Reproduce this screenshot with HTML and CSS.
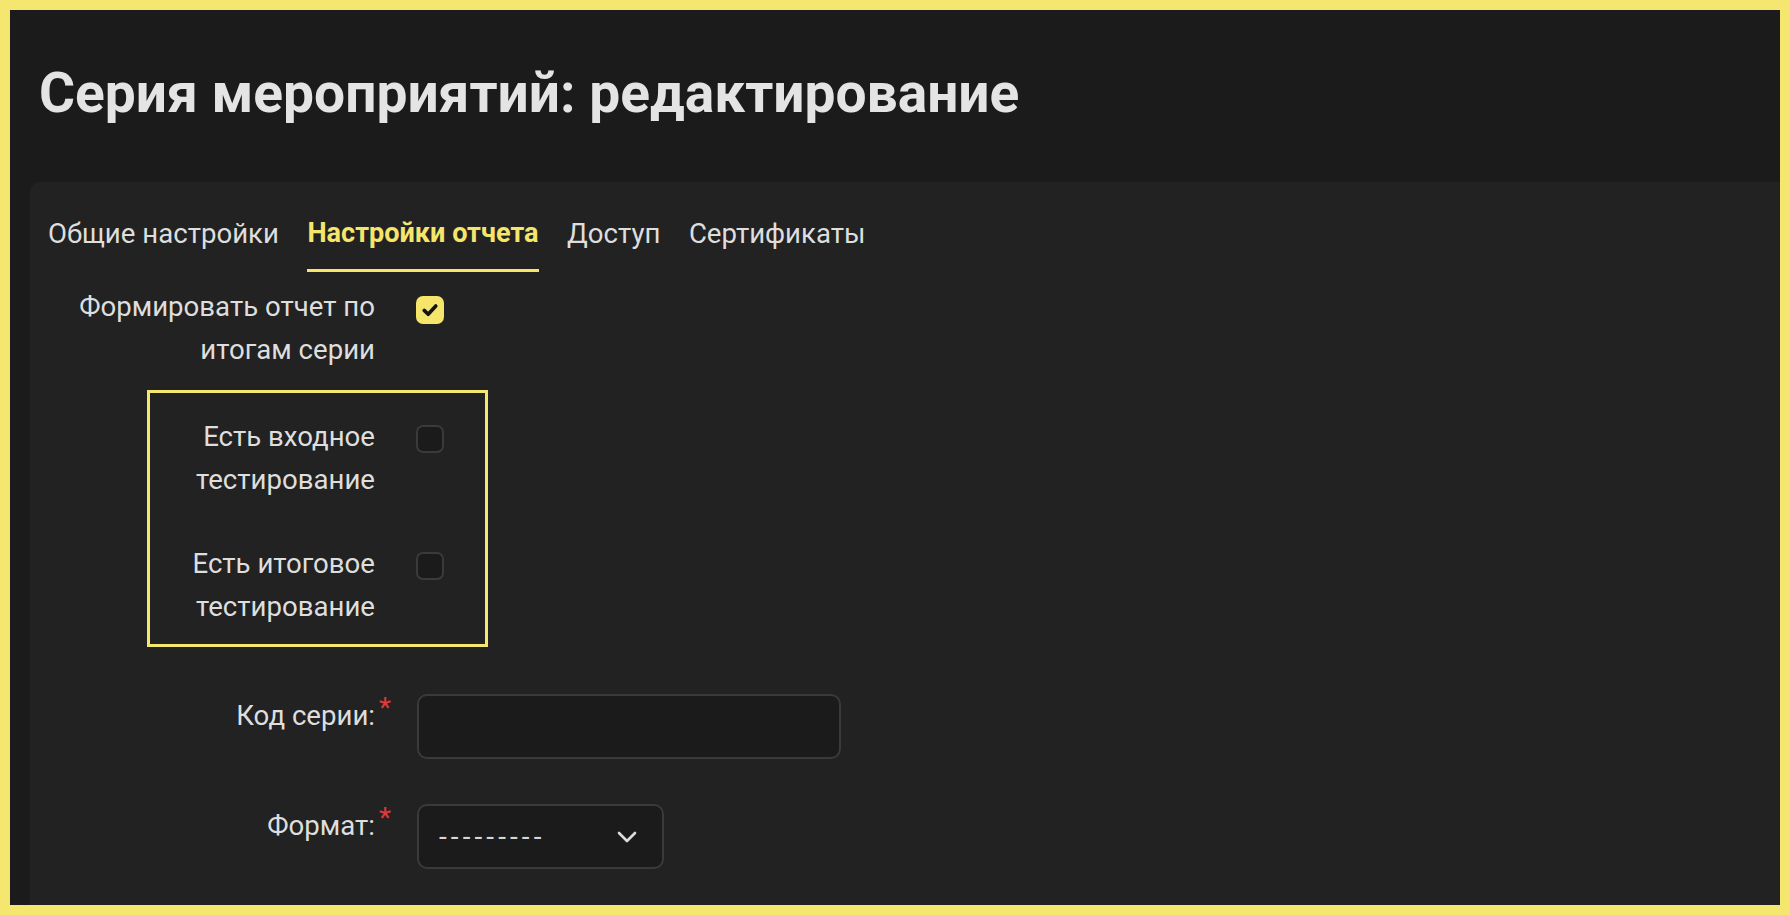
FILE: index.html
```html
<!DOCTYPE html>
<html lang="ru">
<head>
<meta charset="utf-8">
<title>Серия мероприятий: редактирование</title>
<link rel="stylesheet" href="styles.css">
</head>
<body>
<div class="frame">
  <header class="page-header">
    <h1 class="page-title">Серия мероприятий: редактирование</h1>
  </header>
  <main class="card">
    <nav class="tabs">
      <a class="tab">Общие настройки</a>
      <a class="tab tab-active">Настройки отчета</a>
      <a class="tab">Доступ</a>
      <a class="tab">Сертификаты</a>
    </nav>
    <form class="form">
      <div class="row">
        <label class="label">Формировать отчет по итогам серии</label>
        <span class="checkbox checked">
          <svg class="check-icon" viewBox="0 0 28 28" width="28" height="28"><polyline points="8.2,14.4 12.2,18.3 19.8,10" fill="none" stroke="#141414" stroke-width="3.6" stroke-linecap="round" stroke-linejoin="round"/></svg>
        </span>
      </div>
      <div class="group">
        <div class="row">
          <label class="label">Есть входное тестирование</label>
          <span class="checkbox"></span>
        </div>
        <div class="row row-next">
          <label class="label">Есть итоговое тестирование</label>
          <span class="checkbox"></span>
        </div>
      </div>
      <div class="row row-field row-code">
        <label class="label required">Код серии:</label>
        <input class="input" type="text">
      </div>
      <div class="row row-field row-format">
        <label class="label required">Формат:</label>
        <div class="select">
          <span class="select-value">---------</span>
          <svg class="chevron" viewBox="0 0 20 12" width="20" height="12"><polyline points="2,2 10,10 18,2" fill="none" stroke="#dcdcdc" stroke-width="2.6" stroke-linecap="round" stroke-linejoin="round"/></svg>
        </div>
      </div>
    </form>
  </main>
</div>
</body>
</html>
```
FILE: styles.css
```css
html, body {
  margin: 0;
  padding: 0;
}
body {
  font-family: Roboto, "Noto Sans", sans-serif;
  background: #f5e66f;
}
.frame {
  box-sizing: border-box;
  width: 1790px;
  height: 915px;
  border: 10px solid #f5e66f;
  background: #1b1b1b;
  display: flex;
  flex-direction: column;
  overflow: hidden;
}
.page-header {
  box-sizing: border-box;
  height: 172px;
  padding: 51px 0 0 29px;
  flex-shrink: 0;
}
.page-title {
  margin: 0;
  font-size: 55.1px;
  font-weight: 700;
  line-height: normal;
  color: #e4e4e4;
}
.card {
  flex: 1;
  margin-left: 20px;
  background: #222222;
  border-top-left-radius: 10px;
  padding: 35px 0 0 18px;
}
.tabs {
  display: flex;
  gap: 28.5px;
}
.tab {
  font-size: 27.6px;
  line-height: 33px;
  color: #dedede;
  padding-bottom: 19px;
  border-bottom: 3px solid transparent;
}
.tab-active {
  color: #f5e56b;
  font-weight: 700;
  font-size: 27.1px;
  border-bottom-color: #f5e56b;
}
.form {
  margin-top: 13px;
}
.row {
  display: flex;
  align-items: flex-start;
}
.label {
  flex-shrink: 0;
  width: 327px;
  text-align: right;
  font-size: 27.6px;
  line-height: 43px;
  color: #dedede;
  position: relative;
}
.checkbox {
  box-sizing: border-box;
  width: 28px;
  height: 28px;
  margin: 11px 0 0 41px;
  border: 2px solid #3a3a3a;
  border-radius: 7px;
  background: #1b1b1b;
  display: flex;
  align-items: center;
  justify-content: center;
}
.checkbox.checked {
  background: #f5e56b;
  border-color: #f5e56b;
}
.check-icon {
  display: block;
  flex-shrink: 0;
}
.group {
  box-sizing: border-box;
  width: 341px;
  margin: 19px 0 0 99px;
  border: 3px solid #f5e66f;
  padding: 22px 0 16px 0;
}
.group .label {
  width: 225px;
}
.group .checkbox {
  margin-top: 10px;
}
.row-next {
  margin-top: 41px;
}
.row-code {
  margin-top: 47px;
}
.row-format {
  margin-top: 45px;
}
.required::after {
  content: "*";
  position: absolute;
  left: 100%;
  top: -8px;
  margin-left: 4px;
  color: #e0393a;
  font-size: 28px;
  line-height: 43px;
}
.input {
  box-sizing: border-box;
  width: 424px;
  height: 65px;
  margin: 0 0 0 42px;
  border: 2px solid #3a3a3a;
  border-radius: 10px;
  background: #1b1b1b;
  color: #dedede;
  font-family: inherit;
  font-size: 28px;
  padding: 0 20px;
  outline: none;
}
.select {
  box-sizing: border-box;
  width: 247px;
  height: 65px;
  margin-left: 42px;
  border: 2px solid #3a3a3a;
  border-radius: 10px;
  background: #1b1b1b;
  display: flex;
  align-items: center;
  justify-content: space-between;
  padding: 0 25px 0 20px;
}
.select-value {
  font-size: 28px;
  line-height: 33px;
  letter-spacing: 4.1px;
  color: #d6d6d6;
}
.chevron {
  display: block;
  flex-shrink: 0;
}
```
